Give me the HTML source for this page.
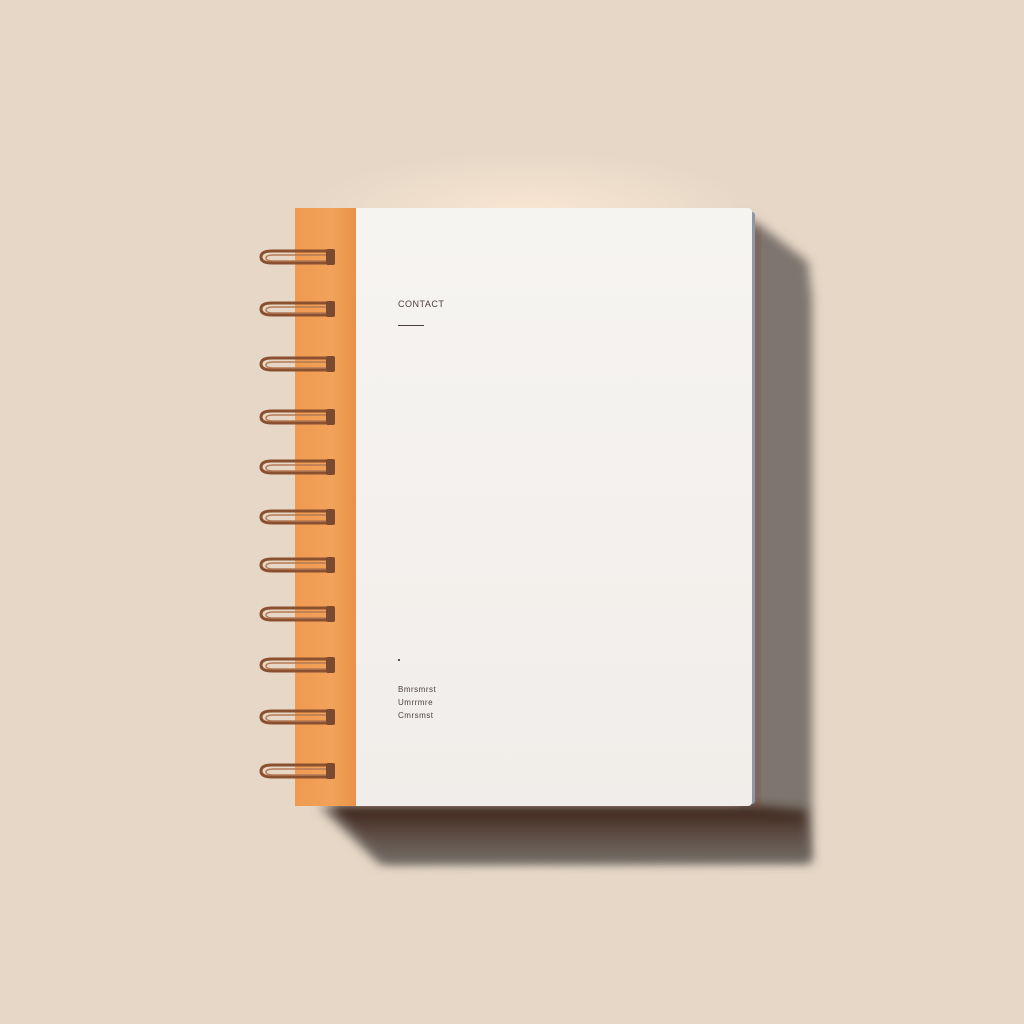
<!DOCTYPE html>
<html><head><style>
body{margin:0;width:1024px;height:1024px;background:#e6d7c6;position:relative;overflow:hidden;font-family:"Liberation Sans",sans-serif}
.glow{position:absolute;left:300px;top:150px;width:460px;height:120px;background:radial-gradient(ellipse at center,rgba(255,236,215,.7),rgba(255,236,215,0) 70%)}
.spine{position:absolute;left:295px;top:208px;width:61px;height:598px;background:linear-gradient(90deg,#ef9a50,#f2a25a 60%,#e89248)}
.page{position:absolute;left:356px;top:208px;width:396px;height:598px;background:linear-gradient(180deg,#f6f4f1,#f1edea);border-radius:0 4px 4px 0}
.edge{position:absolute;left:750px;top:212px;width:5px;height:592px;background:#8f96a4;border-radius:0 3px 3px 0}
.t{position:absolute;color:#4a4040;font-size:9px;letter-spacing:.5px}
</style></head><body>
<div class="glow"></div>
<svg width="1024" height="1024" style="position:absolute;left:0;top:0">
<defs>
<filter id="b" x="-20%" y="-20%" width="140%" height="140%"><feGaussianBlur stdDeviation="5"/></filter>
<linearGradient id="g" x1="0" y1="806" x2="0" y2="866" gradientUnits="userSpaceOnUse"><stop offset="0" stop-color="#3a2016"/><stop offset=".5" stop-color="#5e4e45"/><stop offset="1" stop-color="#757069"/></linearGradient>
</defs>
<polygon points="740,215 760,225 808,262 812,300 812,862 380,864 318,806 740,806" fill="#7d746e" filter="url(#b)"/>
<polygon points="330,806 756,806 806,810 810,862 385,862" fill="url(#g)" filter="url(#b)"/>
<rect x="754" y="230" width="6" height="578" fill="#7a4a35" opacity=".6" filter="url(#b)"/>
</svg>
<div class="spine"></div>
<div class="edge"></div>
<div class="page"></div>
<div class="t" style="left:398px;top:299px">CONTACT</div>
<div style="position:absolute;left:398px;top:325px;width:26px;height:1px;background:#4a4040"></div>
<div style="position:absolute;left:398px;top:659px;width:2px;height:2px;background:#555"></div>
<div class="t" style="left:398px;top:685px;font-size:8px">Bmrsmrst</div>
<div class="t" style="left:398px;top:698px;font-size:8px">Umrrmre</div>
<div class="t" style="left:398px;top:711px;font-size:8px">Cmrsmst</div>
<svg width="1024" height="1024" style="position:absolute;left:0;top:0">
<defs><g id="r">
<path d="M332 2 H272 Q261 2 261 8 Q261 14 272 14 H332" fill="none" stroke="#8a5030" stroke-width="3"/>
<path d="M332 6 H274 Q266 6 266 9 Q266 12 274 12 H332" fill="none" stroke="#b57a55" stroke-width="1.5"/>
<rect x="326" y="0" width="9" height="16" rx="2" fill="#7a4a30"/>
</g></defs>
<use href="#r" y="249"/><use href="#r" y="301"/><use href="#r" y="356"/><use href="#r" y="409"/><use href="#r" y="459"/><use href="#r" y="509"/><use href="#r" y="557"/><use href="#r" y="606"/><use href="#r" y="657"/><use href="#r" y="709"/><use href="#r" y="763"/>
</svg>
</body></html>
